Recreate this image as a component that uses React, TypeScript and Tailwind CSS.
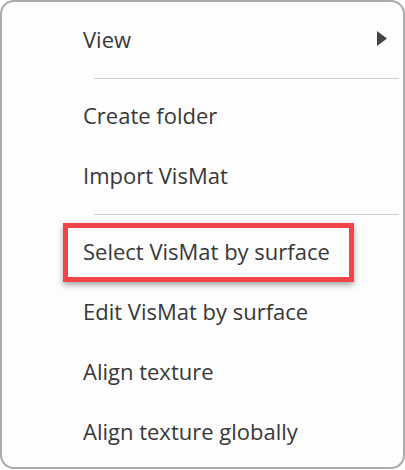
export default function App() {
  const Item = ({ label, arrow, boxed }: { label: string; arrow?: boolean; boxed?: boolean }) => (
    <div className="relative flex h-[60px] items-center pl-[81px] pr-[16px]">
      <span className="mb-[3px] flex-1 text-[22px] leading-none text-[#383838]">{label}</span>
      {arrow && (
        <svg width="10" height="15" viewBox="0 0 10 15" className="mb-[3px]">
          <polygon points="0,0 10,7.5 0,15" fill="#444444" />
        </svg>
      )}
      {boxed && (
        <div className="pointer-events-none absolute left-[61px] top-[1px] h-[59px] w-[291px] border-[5px] border-[#f0444a] shadow-[0_3px_6px_rgba(0,0,0,0.35)]" />
      )}
    </div>
  );
  const Sep = () => (
    <div className="flex h-[16px] items-center pl-[92px] pr-[4px]">
      <div className="h-px w-full bg-[#d0d0d0]" />
    </div>
  );
  return (
    <div className="h-[470px] w-[405px] bg-white" style={{ fontFamily: '"Open Sans", "Noto Sans", sans-serif' }}>
      <div className="h-[469px] w-[405px] rounded-[14px] border-2 border-[#ababab] bg-[#fdfdfd] pt-[8px]">
        <Item label="View" arrow />
        <Sep />
        <Item label="Create folder" />
        <Item label="Import VisMat" />
        <Sep />
        <Item label="Select VisMat by surface" boxed />
        <Item label="Edit VisMat by surface" />
        <Item label="Align texture" />
        <Item label="Align texture globally" />
      </div>
    </div>
  );
}
